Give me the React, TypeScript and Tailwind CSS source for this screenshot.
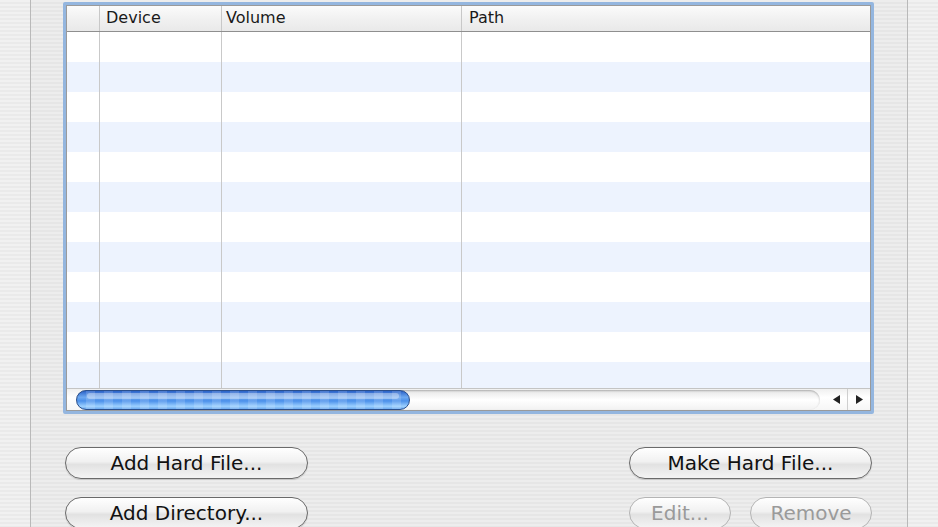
import React from 'react';

const stripes =
  'bg-[repeating-linear-gradient(180deg,#ededed_0px,#ededed_2px,#e6e6e6_2px,#e6e6e6_4px)]';

const rows = Array.from({ length: 12 }, (_, i) => i);

const AquaButton: React.FC<{ label: string; width: string; disabled?: boolean }> = ({ label, width, disabled }) => (
  <button
    type="button"
    className={`${width} h-[32px] rounded-full border text-[20px] leading-none flex items-center justify-center bg-[linear-gradient(180deg,#ffffff_0%,#f1f1f1_45%,#e2e2e2_55%,#f4f4f4_100%)] ${
      disabled
        ? 'border-[#b4b4b4] text-[#9a9a9a]'
        : 'border-[#6a6a6a] text-[#111] shadow-[0_1px_1px_rgba(0,0,0,0.15)]'
    }`}
  >
    {label}
  </button>
);

export default function App() {
  return (
    <div
      className={`h-[527px] w-[938px] overflow-hidden flex ${stripes}`}
      style={{ fontFamily: '"DejaVu Sans", "Liberation Sans", sans-serif' }}
    >
      {/* left pane edge */}
      <div className="w-[31px] border-r border-[#b9b9b9] bg-[repeating-linear-gradient(180deg,#f1f1f1_0px,#f1f1f1_2px,#eaeaea_2px,#eaeaea_4px)]" />

      {/* center panel */}
      <div className="flex-1 pl-[32px] pr-[32px] pt-[2px]">
        {/* table with focus ring */}
        <div className="w-[811px] h-[412px] rounded-[2px] border-[3px] border-[#94b6df] bg-white flex flex-col">
          <div className="flex-1 flex flex-col border border-[#9a9a9a] overflow-hidden">
            {/* header */}
            <div className="h-[26px] flex text-[16px] text-[#1a1a1a] border-b border-[#8f8f8f] bg-[linear-gradient(180deg,#fbfbfb_0%,#f1f1f1_50%,#e9e9e9_100%)]">
              <div className="w-[33px] border-r border-[#c8c8c8]" />
              <div className="w-[122px] border-r border-[#c8c8c8] pl-[6px] flex items-center">Device</div>
              <div className="w-[240px] border-r border-[#c8c8c8] pl-[4px] flex items-center">Volume</div>
              <div className="flex-1 pl-[7px] flex items-center">Path</div>
            </div>

            {/* rows */}
            <div className="h-[357px] overflow-hidden relative">
              {rows.map((i) => (
                <div key={i} className={`h-[30px] flex ${i % 2 === 1 ? 'bg-[#edf3fe]' : 'bg-white'}`}>
                  <div className="w-[33px] border-r border-[#c9c9c9]" />
                  <div className="w-[122px] border-r border-[#c9c9c9]" />
                  <div className="w-[240px] border-r border-[#c9c9c9]" />
                  <div className="flex-1" />
                </div>
              ))}
            </div>

            {/* horizontal scrollbar */}
            <div className="h-[22px] flex items-center border-t border-[#c4c4c4] bg-[linear-gradient(180deg,#f0f0f0_0%,#ffffff_40%,#f6f6f6_100%)]">
              <div className="flex-1 h-full flex items-center pl-[9px] pr-[6px]">
                <div className="w-full h-[20px] rounded-full bg-[linear-gradient(180deg,#e6e6e6_0%,#ffffff_50%,#f2f2f2_100%)] shadow-[inset_0_1px_2px_rgba(0,0,0,0.25)] flex items-center">
                  <div className="w-[334px] h-[20px] rounded-full border border-[#2a4f8c] bg-[linear-gradient(180deg,#2a62c8_0%,#6ea9f0_35%,#4b90ea_55%,#9cd0ff_85%,#6aa8ee_100%)] relative overflow-hidden">
                    <div className="absolute inset-0 bg-[repeating-linear-gradient(90deg,rgba(255,255,255,0)_0px,rgba(255,255,255,0)_9px,rgba(255,255,255,0.14)_9px,rgba(255,255,255,0.14)_18px)]" />
                    <div className="absolute left-[10px] right-[10px] top-[2px] h-[6px] rounded-full bg-white/35" />
                  </div>
                </div>
              </div>
              <div className="w-[22px] h-full flex items-center justify-center border-r border-[#cfcfcf]">
                <svg width="9" height="9" viewBox="0 0 9 9"><polygon points="8,0 8,9 1,4.5" fill="#222" /></svg>
              </div>
              <div className="w-[22px] h-full flex items-center justify-center">
                <svg width="9" height="9" viewBox="0 0 9 9"><polygon points="1,0 1,9 8,4.5" fill="#222" /></svg>
              </div>
            </div>
          </div>
        </div>

        {/* buttons */}
        <div className="mt-[33px] flex justify-between pl-[2px] pr-[3px]">
          <div className="flex flex-col gap-[18px]">
            <AquaButton label="Add Hard File..." width="w-[243px]" />
            <AquaButton label="Add Directory..." width="w-[243px]" />
          </div>
          <div className="flex flex-col gap-[18px] items-end">
            <AquaButton label="Make Hard File..." width="w-[243px]" />
            <div className="flex gap-[19px]">
              <AquaButton label="Edit..." width="w-[102px]" disabled />
              <AquaButton label="Remove" width="w-[122px]" disabled />
            </div>
          </div>
        </div>
      </div>

      {/* right pane edge */}
      <div className="w-[31px] border-l border-[#b9b9b9] bg-[repeating-linear-gradient(180deg,#f1f1f1_0px,#f1f1f1_2px,#eaeaea_2px,#eaeaea_4px)]" />
    </div>
  );
}
